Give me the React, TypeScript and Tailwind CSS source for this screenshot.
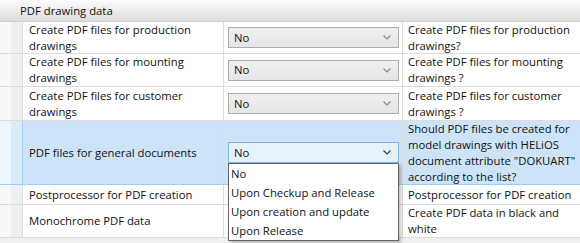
import React from 'react';

type Row = {
  label: string;
  desc: string[];
  h: string;
  combo: boolean;
  selected?: boolean;
};

const rows: Row[] = [
  { label: 'Create PDF files for production\ndrawings', desc: ['Create PDF files for production', 'drawings?'], h: 'h-[32px]', combo: true },
  { label: 'Create PDF files for mounting\ndrawings', desc: ['Create PDF files for mounting', 'drawings ?'], h: 'h-[33px]', combo: true },
  { label: 'Create PDF files for customer\ndrawings', desc: ['Create PDF files for customer', 'drawings ?'], h: 'h-[34px]', combo: true },
  {
    label: 'PDF files for general documents',
    desc: ['Should PDF files be created for', 'model drawings with HELiOS', 'document attribute "DOKUART"', 'according to the list?'],
    h: 'h-[64px]',
    combo: true,
    selected: true,
  },
  { label: 'Postprocessor for PDF creation', desc: ['Postprocessor for PDF creation'], h: 'h-[20px]', combo: false },
  { label: 'Monochrome PDF data', desc: ['Create PDF data in black and', 'white'], h: 'h-[33px]', combo: false },
];

const options = ['No', 'Upon Checkup and Release', 'Upon creation and update', 'Upon Release'];

const Chevron: React.FC<{ dark?: boolean }> = ({ dark }) => (
  <svg width="8" height="5" viewBox="0 0 8 5" className="shrink-0">
    <path d="M0.5 0.5 L4 4 L7.5 0.5" fill="none" stroke={dark ? '#3c3c3c' : '#8a8a8a'} strokeWidth="1.2" />
  </svg>
);

const Combo: React.FC<{ open?: boolean }> = ({ open }) => (
  <div className="relative w-full">
    <div
      className={`flex h-[21px] items-center justify-between border pl-[5px] pr-[7px] ${
        open ? 'border-[#7eb4ea] bg-[#e5f1fb]' : 'border-[#adadad] bg-gradient-to-b from-[#f0f0f0] to-[#e5e5e5]'
      }`}
    >
      <span>No</span>
      <Chevron dark={open} />
    </div>
    {open && (
      <div className="absolute left-0 top-full z-10 w-full border border-[#646464] bg-white shadow-[2px_2px_3px_rgba(0,0,0,0.25)]">
        {options.map((o) => (
          <div key={o} className="h-[19px] pl-[2px] leading-[19px]">
            {o}
          </div>
        ))}
      </div>
    )}
  </div>
);

export default function App() {
  return (
    <div className="h-[243px] w-[580px] overflow-hidden bg-white font-['Segoe_UI','Open_Sans',sans-serif] text-[11.3px] leading-[16px] text-[#111]">
      <div className="flex h-[22px] items-center border-b border-[#cfcfcf] bg-gradient-to-b from-[#fbfbfb] to-[#dcdcdc] pl-[20px]">
        PDF drawing data
      </div>
      {rows.map((r, i) => (
        <div key={i} className={`flex ${r.h} border-b ${r.selected ? 'border-[#9fcdf2] bg-[#cde4f8]' : 'border-[#dcdcdc]'}`}>
          <div
            className={`flex w-[23px] shrink-0 border-r ${
              r.selected ? 'border-[#a9d1f0]' : 'border-[#dcdcdc]'
            }`}
          >
            <div className={`w-[11px] ${r.selected ? 'bg-[#ecf5fc]' : 'bg-[#f8f8f8]'}`} />
            <div className={`flex-1 ${r.selected ? 'bg-[#d9eaf8]' : 'bg-[#efefef]'}`} />
          </div>
          <div className="flex w-[201px] shrink-0 items-center whitespace-pre-line border-r border-[#dcdcdc] pl-[6px]">
            {r.label}
          </div>
          <div className="flex w-[179px] shrink-0 items-center border-r border-[#dcdcdc] pl-[4px] pr-[3px]">
            {r.combo && <Combo open={r.selected} />}
          </div>
          <div className="flex flex-1 flex-col justify-center pl-[5px] whitespace-nowrap">
            {r.desc.map((d) => (
              <div key={d}>{d}</div>
            ))}
          </div>
        </div>
      ))}
      <div className="h-[5px] bg-[#f0f0f0]" />
    </div>
  );
}
